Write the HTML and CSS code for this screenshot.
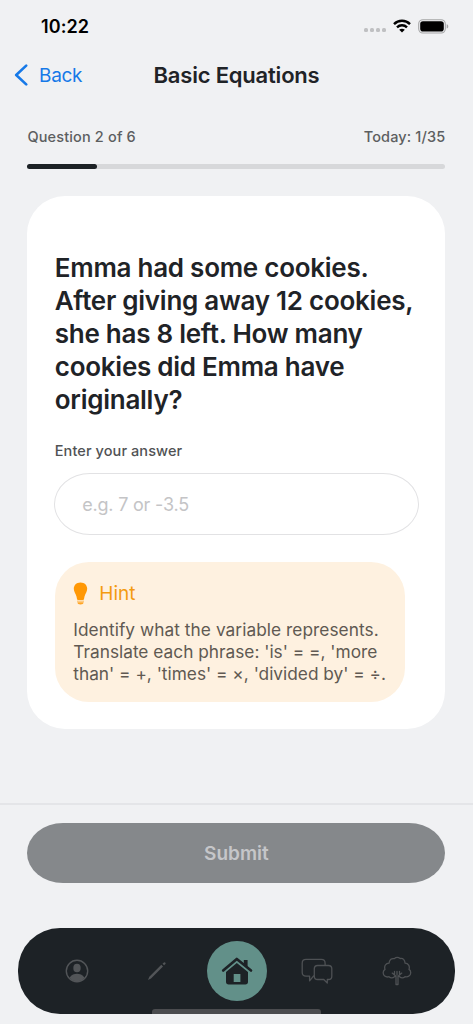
FILE: index.html
```html
<!DOCTYPE html>
<html lang="en">
<head>
<meta charset="utf-8">
<title>Basic Equations</title>
<link rel="stylesheet" href="styles.css">
</head>
<body>
<div class="screen">
  <div class="status">
    <span class="clock">10:22</span>
    <div class="indicators">
      <span class="dots"><i></i><i></i><i></i><i></i></span>
      <svg class="wifi" width="18" height="14" viewBox="0 0 18 14" fill="none" stroke="#000" stroke-width="2.4"><path d="M1 5.1C5.4.7 12.600.7 17 5.100M4 8.300c2.800-2.700 7.200-2.700 10 0"/><path d="M9 13.400 6.200 10.700c1.500-1.300 4.100-1.300 5.600 0z" fill="#000" stroke="none"/></svg>
      <svg class="battery" width="31" height="15" viewBox="0 0 31 15"><rect x=".7" y=".7" width="26.600" height="13.300" rx="4.200" fill="none" stroke="#a5a6a7" stroke-width="1.100"/><rect x="2.200" y="2.200" width="23.600" height="10.300" rx="2.800"/><path d="M28.700 5.200c2.100.5 2.100 3.900 0 4.400z" fill="#a5a6a7"/></svg>
    </div>
  </div>
  <header class="header">
    <a class="back"><svg width="14" height="22" viewBox="0 0 14 22" fill="none" stroke="#1679e8" stroke-width="2.600" stroke-linecap="round" stroke-linejoin="round"><path d="M12.200 1.600 2.200 11l10 9.400"/></svg><span>Back</span></a>
    <h1>Basic Equations</h1>
  </header>
  <div class="progress">
    <div class="counts"><span>Question 2 of 6</span><span>Today: 1/35</span></div>
    <div class="track"><div class="fill"></div></div>
  </div>
  <main class="card">
    <h2>Emma had some cookies.<br>After giving away 12 cookies,<br>she has 8 left. How many<br>cookies did Emma have<br>originally?</h2>
    <label>Enter your answer</label>
    <div class="field">e.g. 7 or -3.5</div>
    <section class="hint">
      <div class="hint-title"><svg width="15" height="23" viewBox="0 0 15 23" fill="#ff9805"><path d="M7.500.4C3.300.4.800 3.200.800 6.800c0 3.100 2 4.700 2.700 7.600l.5 2.600c.1.700.4 1 1 1h5c.6 0 .9-.3 1-1l.5-2.600c.7-2.900 2.700-4.500 2.700-7.600C14.200 3.200 11.700.4 7.500.4z"/><path d="M4 18.800h7v.8H4zM4.400 20.300h6.200c0 1.500-1.300 2.200-3.100 2.200s-3.100-.7-3.100-2.200z" opacity=".85"/></svg><span>Hint</span></div>
      <p><span class="wide">Identify what the variable represents.</span><br>Translate each phrase: 'is' = =, 'more<br>than' = +, 'times' = ×, 'divided by' = ÷.</p>
    </section>
  </main>
  <footer class="actions"><div class="submit">Submit</div></footer>
  <nav class="tabs">
    <span class="tab"><svg width="24" height="24" viewBox="0 0 24 24"><circle cx="12" cy="12" r="10.700" fill="none" stroke="#525558" stroke-width="1.400"/><ellipse cx="12" cy="9" rx="3.700" ry="4.300" fill="#525558"/><path d="M4.500 18.700c2-3.100 4.800-4 7.500-4s5.500.9 7.500 4c-4.100 4.700-10.900 4.700-15 0z" fill="#525558"/></svg></span>
    <span class="tab"><svg width="22" height="22" viewBox="0 0 22 22" fill="#525558"><path d="m3.300 16.700 12-11.900 1.700 1.700L5 18.400l-3 1.500zM16.500 3.700l1.400-1.300q.6-.5 1.200.1l.3.300q.6.600 0 1.200L18.100 5.300z"/></svg></span>
    <span class="tab home"><svg width="32" height="30" viewBox="0 0 32 30"><path d="M2.200 14.500 15.800 3 30 14.500" fill="none" stroke="#1d2226" stroke-width="2.700" stroke-linecap="round" stroke-linejoin="round"/><path d="M22.800 4h3.800v7L22.800 8zM5 16 15.800 7 27 16v9.700q0 2.700-2.700 2.700H7.700Q5 28.400 5 25.700zM12.700 17.900v8.100h6.700v-8.100z" fill="#1d2226" fill-rule="evenodd"/></svg></span>
    <span class="tab"><svg width="32" height="27" viewBox="0 0 32 27" fill="none" stroke="#4e5154" stroke-width="1.300" stroke-linejoin="round"><path d="M12.800 17.700 8.600 22.800v-4.700H5q-3.800 0-3.800-3.800V5.200q0-3.800 3.800-3.800h15.300q3.800 0 3.800 3.800v1.900M16.600 7.500h10.900q3.300 0 3.300 3.300v7.400q0 3.300-3.300 3.300h-1.200v3.600l-3.500-3.600h-6.200q-3.300 0-3.300-3.300v-7.400q0-3.300 3.300-3.300z"/></svg></span>
    <span class="tab"><svg width="30" height="30" viewBox="0 0 30 30" fill="none" stroke="#4e5154" stroke-width="1.300" stroke-linejoin="round" stroke-linecap="round"><path d="M12.800 20.500C11 22 8.700 22.300 7 20.700 3.800 21.800.7 19.500 1.300 16c.1-1.200.8-2 1.700-2.600-1.100-3.300.8-6.300 4-6.300C7.600 3.500 9.600 2 12.200 2.700c2-1.600 4.300-1.400 5.900-.2 3-.7 4.700 1.500 5 4.700 3.200 0 5 3 3.900 6.200 2.300 1.300 2.400 5.700-.2 6.700-1.200.8-2.500.8-3.800.6-1.500 1.500-4 1.300-5.700-.2M14 28.500v-8.200l-3.800-3.200M16 28.500v-8.200l3.800-3.200M14 28.500h2M15 19v-3.500M12.500 18.500v-3M17.500 18.500v-3"/></svg></span>
    <i class="home-indicator"></i>
  </nav>
</div>
</body>
</html>
```
FILE: styles.css
```css
* { box-sizing: border-box; }
body { margin: 0; background: #f0f1f3; font-family: Inter, "Liberation Sans", sans-serif; color: #1f2327; }
h1, h2, p { margin: 0; }
svg { display: block; flex: none; }
.screen { width: 473px; height: 1024px; display: flex; flex-direction: column; overflow: hidden; }
.status { height: 50px; padding: 2px 24px 0 41px; display: flex; align-items: center; justify-content: space-between; }
.clock { font-size: 18px; font-weight: 600; color: #000; letter-spacing: .1px; }
.indicators { display: flex; align-items: center; }
.dots { display: flex; gap: 1.700px; margin: 8px 7px 0 0; }
.dots i { width: 4.200px; height: 4.200px; border-radius: 1.500px; background: #bfc0c2; }
.wifi { margin-right: 7px; }
.header { height: 50px; display: grid; grid-template-columns: 1fr auto 1fr; align-items: center; padding-left: 14px; padding-right: 14px; }
.back { display: flex; align-items: center; gap: 11px; color: #1679e8; font-size: 19px; letter-spacing: -.3px; }
.header h1 { font-size: 22px; font-weight: 600; letter-spacing: -.2px; }
.progress { padding: 28px 27.600px 0 27.400px; }
.counts { display: flex; justify-content: space-between; font-size: 14.500px; line-height: 18px; font-weight: 500; letter-spacing: .15px; color: #5c5e60; }
.track { margin-top: 18px; height: 5px; border-radius: 3px; background: #d7d8da; }
.fill { width: 16.667%; height: 5px; border-radius: 3px; background: #1c2125; }
.card { margin: 27px 27.600px 0 27.400px; height: 533px; padding: 55px 26.600px 0 27.400px; border-radius: 38px; background: #fff; }
.card h2 { font-size: 26px; line-height: 33px; font-weight: 600; letter-spacing: -.26px; white-space: nowrap; }
.card label { display: block; margin-top: 26px; font-size: 14.500px; line-height: 18px; font-weight: 500; letter-spacing: .09px; color: #505254; }
.field { margin: 13px 0 0 -.600px; height: 62px; border: 1px solid #e2e2e4; border-radius: 36px / 31px; padding-left: 27px; display: flex; align-items: center; font-size: 18px; letter-spacing: -.2px; color: #c4c4c6; }
.hint { margin-top: 27px; width: 350px; height: 140px; border-radius: 34px; background: #fef1e0; padding: 18px 0 0 18.500px; }
.hint-title { display: flex; align-items: center; height: 26px; gap: 11px; color: #f49b10; font-size: 19px; }
.hint p { margin-top: 13px; font-size: 17.300px; line-height: 22px; color: #605952; white-space: nowrap; }
.wide { letter-spacing: .05px; }
.actions { margin-top: 74px; border-top: 2px solid #e4e5e8; padding: 18px 27.600px 0 27.400px; height: 125px; }
.submit { height: 60px; border-radius: 36px / 30px; background: #85888b; color: #c5c6c9; display: flex; align-items: center; justify-content: center; font-size: 19px; font-weight: 600; }
.tabs { position: relative; margin: 0 18px 0 18.400px; height: 86px; border-radius: 42px; background: #1d2226; overflow: hidden; display: flex; justify-content: center; align-items: center; gap: 20px; flex: none; }
.tab { width: 60px; height: 60px; display: flex; align-items: center; justify-content: center; }
.home { background: #629089; border-radius: 50%; }
.home-indicator { position: absolute; left: 133.500px; bottom: 0; width: 169px; height: 5px; border-radius: 3px 3px 0 0; background: #4b4c4f; }
```
